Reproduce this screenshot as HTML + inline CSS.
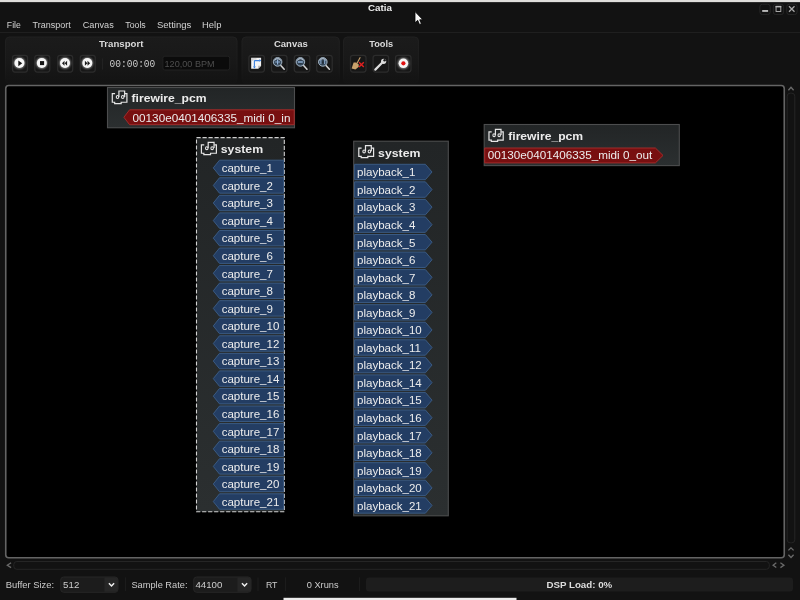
<!DOCTYPE html><html><head><meta charset="utf-8"><style>html,body{margin:0;padding:0;background:#121212;overflow:hidden}svg{display:block;will-change:transform}</style></head><body><svg width="800" height="600" viewBox="0 0 800 600"><rect x="0" y="0" width="800" height="600" fill="#121212"/>
<rect x="0" y="0" width="800" height="2.2" fill="#dfdedb"/>
<rect x="0" y="2.2" width="800" height="0.8" fill="#2a2a2a"/>
<rect x="759.9" y="4.25" width="10.3" height="10.3" rx="2.5" fill="none" stroke="#262626" stroke-width="1"/>
<rect x="773.3" y="4.25" width="10.3" height="10.3" rx="2.5" fill="none" stroke="#262626" stroke-width="1"/>
<rect x="786.75" y="4.25" width="10.3" height="10.3" rx="2.5" fill="none" stroke="#262626" stroke-width="1"/>
<rect x="762.2" y="10" width="5.9" height="1.9" fill="#b8b8b8"/>
<rect x="776.05" y="6.4" width="4.75" height="5.05" fill="none" stroke="#b8b8b8" stroke-width="0.9"/>
<rect x="775.6" y="5.9" width="5.65" height="1.5" fill="#b8b8b8"/>
<path d="M789 6.3 L794.5 11.7 M794.5 6.3 L789 11.7" stroke="#a8a8a8" stroke-width="1.3"/>
<rect x="0" y="32" width="800" height="1" fill="#1f1f1f"/>
<rect x="5.5" y="37" width="231.5" height="46.5" rx="4" fill="url(#grpg)" stroke="url(#grps)" stroke-width="1"/>
<rect x="242.0" y="37" width="97.30000000000001" height="46.5" rx="4" fill="url(#grpg)" stroke="url(#grps)" stroke-width="1"/>
<rect x="343.5" y="37" width="75" height="46.5" rx="4" fill="url(#grpg)" stroke="url(#grps)" stroke-width="1"/>
<rect x="12.5" y="55.3" width="15" height="16.7" rx="2.5" fill="#171717" stroke="#2c2c2c" stroke-width="1.25"/>
<rect x="34.8" y="55.3" width="15" height="16.7" rx="2.5" fill="#171717" stroke="#2c2c2c" stroke-width="1.25"/>
<rect x="57.7" y="55.3" width="15" height="16.7" rx="2.5" fill="#171717" stroke="#2c2c2c" stroke-width="1.25"/>
<rect x="80.25" y="55.3" width="15" height="16.7" rx="2.5" fill="#171717" stroke="#2c2c2c" stroke-width="1.25"/>
<rect x="248.9" y="55.3" width="15.5" height="16.7" rx="2.5" fill="#171717" stroke="#2c2c2c" stroke-width="1.25"/>
<rect x="271.5" y="55.3" width="15.5" height="16.7" rx="2.5" fill="#171717" stroke="#2c2c2c" stroke-width="1.25"/>
<rect x="294.3" y="55.3" width="15.5" height="16.7" rx="2.5" fill="#171717" stroke="#2c2c2c" stroke-width="1.25"/>
<rect x="316.7" y="55.3" width="15.5" height="16.7" rx="2.5" fill="#171717" stroke="#2c2c2c" stroke-width="1.25"/>
<rect x="350.5" y="55.3" width="15.5" height="16.7" rx="2.5" fill="#171717" stroke="#2c2c2c" stroke-width="1.25"/>
<rect x="373.1" y="55.3" width="15.5" height="16.7" rx="2.5" fill="#171717" stroke="#2c2c2c" stroke-width="1.25"/>
<rect x="395.5" y="55.3" width="15.5" height="16.7" rx="2.5" fill="#171717" stroke="#2c2c2c" stroke-width="1.25"/>
<rect x="102" y="58.5" width="1" height="11.2" fill="#222"/>
<defs><filter id="glow" x="-50%" y="-50%" width="200%" height="200%"><feGaussianBlur stdDeviation="0.9"/></filter><linearGradient id="grpg" x1="0" y1="0" x2="0" y2="1"><stop offset="0" stop-color="#1b1b1b"/><stop offset="0.55" stop-color="#181818"/><stop offset="1" stop-color="#131313"/></linearGradient><linearGradient id="grps" x1="0" y1="0" x2="0" y2="1"><stop offset="0" stop-color="#202020"/><stop offset="0.6" stop-color="#1c1c1c"/><stop offset="1" stop-color="#131313"/></linearGradient><radialGradient id="lens" cx="0.5" cy="0.55" r="0.55"><stop offset="0" stop-color="#1f2a35"/><stop offset="0.7" stop-color="#3e5266"/><stop offset="1" stop-color="#7d93a8"/></radialGradient><linearGradient id="boxg" x1="0" y1="0" x2="0" y2="1"><stop offset="0" stop-color="#222526"/><stop offset="1" stop-color="#2b2f30"/></linearGradient></defs>
<circle cx="19.45" cy="63" r="5.5" fill="#ffffff" opacity="0.6" filter="url(#glow)"/>
<circle cx="19.45" cy="63" r="5.0" fill="#f6f6f6"/>
<circle cx="41.8" cy="63" r="5.5" fill="#ffffff" opacity="0.6" filter="url(#glow)"/>
<circle cx="41.8" cy="63" r="5.0" fill="#f6f6f6"/>
<circle cx="65.0" cy="63" r="5.5" fill="#ffffff" opacity="0.6" filter="url(#glow)"/>
<circle cx="65.0" cy="63" r="5.0" fill="#f6f6f6"/>
<circle cx="87.3" cy="63" r="5.5" fill="#ffffff" opacity="0.6" filter="url(#glow)"/>
<circle cx="87.3" cy="63" r="5.0" fill="#f6f6f6"/>
<path d="M18.3 60.4 L22.2 63.3 L18.3 66.2 Z" fill="#151515"/>
<rect x="40" y="61.1" width="4.1" height="4" fill="#151515"/>
<path d="M62 63.2 L64.5 60.7 L64.5 65.7 Z M64.7 63.2 L67.1 60.7 L67.1 65.7 Z" fill="#1a1a1a"/>
<path d="M84.9 60.7 L87.4 63.2 L84.9 65.7 Z M87.5 60.7 L90.1 63.2 L87.5 65.7 Z" fill="#1a1a1a"/>
<rect x="162.9" y="56.2" width="66.8" height="13.8" rx="2" fill="#0b0b0b" stroke="#222222" stroke-width="1"/>
<path d="M251.2 57.8 H261.1 V65.8 L258.1 68.8 H251.2 Z" fill="#f4f4f4"/>
<path d="M258.1 68.8 V65.8 H261.1 Z" fill="#b8b8b8"/>
<path d="M252 58.9 H256.5 M252 60.1 H253.4" stroke="#a0a0a0" stroke-width="0.6"/>
<path d="M254.4 60.6 H259.8 M254.4 60.6 V66.8" stroke="#3a7fdc" stroke-width="1.1" fill="none"/>
<path d="M259.5 59.1 L261.2 60.6 L259.5 62.1 Z M252.9 66.5 L254.4 68.4 L255.9 66.5 Z" fill="#3a7fdc"/>
<path d="M280.8 65.4 L284.20000000000005 69.2" stroke="#d4d4d4" stroke-width="1.5" stroke-linecap="round"/>
<circle cx="277.6" cy="61.9" r="4.3" fill="url(#lens)" stroke="#9fb0c0" stroke-width="1.0"/>
<path d="M274.6 60.6 A3.3 3.3 0 0 1 280.6 60.6" fill="none" stroke="#e4eaf0" stroke-width="0.9" opacity="0.8"/>
<path d="M303.59999999999997 65.4 L307.0 69.2" stroke="#d4d4d4" stroke-width="1.5" stroke-linecap="round"/>
<circle cx="300.4" cy="61.9" r="4.3" fill="url(#lens)" stroke="#9fb0c0" stroke-width="1.0"/>
<path d="M297.4 60.6 A3.3 3.3 0 0 1 303.4 60.6" fill="none" stroke="#e4eaf0" stroke-width="0.9" opacity="0.8"/>
<path d="M326.0 65.4 L329.40000000000003 69.2" stroke="#d4d4d4" stroke-width="1.5" stroke-linecap="round"/>
<circle cx="322.8" cy="61.9" r="4.3" fill="url(#lens)" stroke="#9fb0c0" stroke-width="1.0"/>
<path d="M319.8 60.6 A3.3 3.3 0 0 1 325.8 60.6" fill="none" stroke="#e4eaf0" stroke-width="0.9" opacity="0.8"/>
<path d="M275.2 62 H280 M277.6 59.6 V64.4" stroke="#8fb0d6" stroke-width="1.2"/>
<path d="M298 62 H302.8" stroke="#8fb0d6" stroke-width="1.5"/>
<path d="M320.9 59.9 V64 M324.7 59.9 V64" stroke="#8fb0d6" stroke-width="1.0"/>
<path d="M357 63.2 L360.3 57.3" stroke="#c9a26c" stroke-width="1.1"/>
<path d="M351.6 68.6 L353.6 62.6 L356 62.4 L358.6 64.2 L358.8 66.8 L355.4 69.4 Z" fill="#c9a26c"/>
<path d="M359 62.2 L363.8 67 M363.8 62.2 L359 67" stroke="#e02020" stroke-width="1.4"/>
<path d="M375.3 69.6 L382.6 62.3" stroke="#dcdcdc" stroke-width="2.2" stroke-linecap="round"/>
<circle cx="383.6" cy="61.3" r="2.6" fill="#dcdcdc"/><circle cx="384.6" cy="60.3" r="1.2" fill="#1a1a1a"/>
<circle cx="403.4" cy="63.3" r="5.6" fill="#ffffff" opacity="0.5" filter="url(#glow)"/>
<circle cx="403.4" cy="63.3" r="4.8" fill="#f4f4f4"/><circle cx="403.4" cy="63.3" r="2.1" fill="#e01010"/>
<rect x="5.75" y="85.5" width="778.5" height="472.3" rx="3" fill="#000" stroke="#646464" stroke-width="1.6"/>
<path d="M788.4 90.3 L791.0 87.3 L793.6 90.3" fill="none" stroke="#6a6a6a" stroke-width="1.3"/>
<rect x="787.2" y="93.2" width="7.6" height="449.6" rx="3" fill="none" stroke="#252525" stroke-width="1"/>
<path d="M788.4 550.4 L791.0 547.8 L793.6 550.4" fill="none" stroke="#6a6a6a" stroke-width="1.3"/>
<path d="M788.4 554.7 L791.0 557.5 L793.6 554.7" fill="none" stroke="#6a6a6a" stroke-width="1.3"/>
<path d="M11.1 562.8 L7.3 565.2 L11.1 567.6" fill="none" stroke="#6a6a6a" stroke-width="1.3"/>
<rect x="13.8" y="561.5" width="755.5" height="7.8" rx="3" fill="none" stroke="#252525" stroke-width="1"/>
<path d="M776.3 562.8 L773.1 565.2 L776.3 567.6" fill="none" stroke="#6a6a6a" stroke-width="1.3"/>
<path d="M780.4 562.8 L783.9 565.2 L780.4 567.6" fill="none" stroke="#6a6a6a" stroke-width="1.3"/>
<rect x="60.7" y="577" width="57.3" height="15.3" rx="3" fill="#1c1c1c" stroke="#262626" stroke-width="1"/>
<path d="M104.5 577.5 H115.0 Q118.0 577.5 118.0 580.5 V588.8 Q118.0 591.8 115.0 591.8 H104.5 Z" fill="#262626"/>
<path d="M108.9 583.2 L111.5 585.9 L114.1 583.2" fill="none" stroke="#f0f0f0" stroke-width="1.5"/>
<rect x="125" y="577.3" width="1" height="13.7" fill="#1c1c1c"/>
<rect x="193.7" y="577" width="57.400000000000006" height="15.3" rx="3" fill="#1c1c1c" stroke="#262626" stroke-width="1"/>
<path d="M237.5 577.5 H248.1 Q251.1 577.5 251.1 580.5 V588.8 Q251.1 591.8 248.1 591.8 H237.5 Z" fill="#262626"/>
<path d="M241.95000000000002 583.2 L244.55 585.9 L247.15 583.2" fill="none" stroke="#f0f0f0" stroke-width="1.5"/>
<rect x="257.5" y="577.3" width="1" height="13.7" fill="#1c1c1c"/>
<rect x="285" y="577.3" width="1" height="13.7" fill="#1c1c1c"/>
<rect x="359" y="577.3" width="1" height="13.7" fill="#1c1c1c"/>
<rect x="366" y="577.5" width="427" height="14.1" rx="3" fill="#1d1d1d"/>
<rect x="283.5" y="597.8" width="233" height="2.2" fill="#ececec"/>
<rect x="107.5" y="87.5" width="187.0" height="40.25" fill="url(#boxg)" stroke="#4c4d4e" stroke-width="1.1"/>
<path d="M115.06 93.62 H112.29 V102.23 H114.66 V103.58 H121.18 V102.23 H126.91 V93.62 H124.93" fill="none" stroke="#e6e6e6" stroke-width="1.2"/>
<path d="M118.91 96.94 V91.02 H124.64 V96.94" fill="none" stroke="#e6e6e6" stroke-width="1.2"/>
<ellipse cx="117.53" cy="97.04" rx="1.2343749999999998" ry="1.5057692307692307" fill="none" stroke="#e6e6e6" stroke-width="1.1"/>
<ellipse cx="122.76" cy="97.04" rx="1.2343749999999998" ry="1.5057692307692307" fill="none" stroke="#e6e6e6" stroke-width="1.1"/>
<path d="M123.9 117.25 L129.6 109.8 H294.2 V124.7 H129.6 Z" fill="#780f10" stroke="#a02c2a" stroke-width="1"/>
<rect x="196.5" y="137.6" width="87.80000000000001" height="374.20000000000005" fill="url(#boxg)"/>
<rect x="196.5" y="137.6" width="87.80000000000001" height="374.20000000000005" fill="none" stroke="#d0d0d0" stroke-width="1.1" stroke-dasharray="4.2 1.8"/>
<path d="M204.24 144.85 H201.41 V153.27 H203.84 V154.59 H210.52 V153.27 H216.39 V144.85 H214.37" fill="none" stroke="#e6e6e6" stroke-width="1.2"/>
<path d="M208.19 148.1 V142.31 H214.06 V148.1" fill="none" stroke="#e6e6e6" stroke-width="1.2"/>
<ellipse cx="206.77" cy="148.2" rx="1.2656249999999991" ry="1.472307692307691" fill="none" stroke="#e6e6e6" stroke-width="1.1"/>
<ellipse cx="212.14" cy="148.2" rx="1.2656249999999991" ry="1.472307692307691" fill="none" stroke="#e6e6e6" stroke-width="1.1"/>
<path d="M213.3 167.89999999999998 L219.5 160.2 H283.6 V175.6 H219.5 Z" fill="#233d63" stroke="#3a5a82" stroke-width="1"/>
<path d="M213.3 185.45999999999998 L219.5 177.76 H283.6 V193.16 H219.5 Z" fill="#233d63" stroke="#3a5a82" stroke-width="1"/>
<path d="M213.3 203.01999999999998 L219.5 195.32 H283.6 V210.72 H219.5 Z" fill="#233d63" stroke="#3a5a82" stroke-width="1"/>
<path d="M213.3 220.57999999999998 L219.5 212.88 H283.6 V228.28 H219.5 Z" fill="#233d63" stroke="#3a5a82" stroke-width="1"/>
<path d="M213.3 238.14 L219.5 230.44 H283.6 V245.84 H219.5 Z" fill="#233d63" stroke="#3a5a82" stroke-width="1"/>
<path d="M213.3 255.7 L219.5 248.0 H283.6 V263.4 H219.5 Z" fill="#233d63" stroke="#3a5a82" stroke-width="1"/>
<path d="M213.3 273.25999999999993 L219.5 265.55999999999995 H283.6 V280.9599999999999 H219.5 Z" fill="#233d63" stroke="#3a5a82" stroke-width="1"/>
<path d="M213.3 290.82 L219.5 283.12 H283.6 V298.52 H219.5 Z" fill="#233d63" stroke="#3a5a82" stroke-width="1"/>
<path d="M213.3 308.37999999999994 L219.5 300.67999999999995 H283.6 V316.0799999999999 H219.5 Z" fill="#233d63" stroke="#3a5a82" stroke-width="1"/>
<path d="M213.3 325.94 L219.5 318.24 H283.6 V333.64 H219.5 Z" fill="#233d63" stroke="#3a5a82" stroke-width="1"/>
<path d="M213.3 343.49999999999994 L219.5 335.79999999999995 H283.6 V351.19999999999993 H219.5 Z" fill="#233d63" stroke="#3a5a82" stroke-width="1"/>
<path d="M213.3 361.06 L219.5 353.36 H283.6 V368.76 H219.5 Z" fill="#233d63" stroke="#3a5a82" stroke-width="1"/>
<path d="M213.3 378.61999999999995 L219.5 370.91999999999996 H283.6 V386.31999999999994 H219.5 Z" fill="#233d63" stroke="#3a5a82" stroke-width="1"/>
<path d="M213.3 396.17999999999995 L219.5 388.47999999999996 H283.6 V403.87999999999994 H219.5 Z" fill="#233d63" stroke="#3a5a82" stroke-width="1"/>
<path d="M213.3 413.73999999999995 L219.5 406.03999999999996 H283.6 V421.43999999999994 H219.5 Z" fill="#233d63" stroke="#3a5a82" stroke-width="1"/>
<path d="M213.3 431.29999999999995 L219.5 423.59999999999997 H283.6 V438.99999999999994 H219.5 Z" fill="#233d63" stroke="#3a5a82" stroke-width="1"/>
<path d="M213.3 448.85999999999996 L219.5 441.15999999999997 H283.6 V456.55999999999995 H219.5 Z" fill="#233d63" stroke="#3a5a82" stroke-width="1"/>
<path d="M213.3 466.41999999999996 L219.5 458.71999999999997 H283.6 V474.11999999999995 H219.5 Z" fill="#233d63" stroke="#3a5a82" stroke-width="1"/>
<path d="M213.3 483.97999999999996 L219.5 476.28 H283.6 V491.67999999999995 H219.5 Z" fill="#233d63" stroke="#3a5a82" stroke-width="1"/>
<path d="M213.3 501.53999999999996 L219.5 493.84 H283.6 V509.23999999999995 H219.5 Z" fill="#233d63" stroke="#3a5a82" stroke-width="1"/>
<rect x="353.7" y="141.2" width="94.60000000000002" height="374.59999999999997" fill="url(#boxg)" stroke="#4c4d4e" stroke-width="1.1"/>
<path d="M361.6 148.15 H358.8 V156.33 H361.2 V157.61 H367.8 V156.33 H373.6 V148.15 H371.6" fill="none" stroke="#e6e6e6" stroke-width="1.2"/>
<path d="M365.5 151.3 V145.69 H371.3 V151.3" fill="none" stroke="#e6e6e6" stroke-width="1.2"/>
<ellipse cx="364.1" cy="151.4" rx="1.25" ry="1.427692307692309" fill="none" stroke="#e6e6e6" stroke-width="1.1"/>
<ellipse cx="369.4" cy="151.4" rx="1.25" ry="1.427692307692309" fill="none" stroke="#e6e6e6" stroke-width="1.1"/>
<path d="M354.6 164.3 H425.4 L432 172.0 L425.4 179.70000000000002 H354.6 Z" fill="#233d63" stroke="#3a5a82" stroke-width="1"/>
<path d="M354.6 181.85000000000002 H425.4 L432 189.55 L425.4 197.25000000000003 H354.6 Z" fill="#233d63" stroke="#3a5a82" stroke-width="1"/>
<path d="M354.6 199.4 H425.4 L432 207.10000000000002 L425.4 214.8 H354.6 Z" fill="#233d63" stroke="#3a5a82" stroke-width="1"/>
<path d="M354.6 216.95000000000002 H425.4 L432 224.65000000000003 L425.4 232.35000000000002 H354.6 Z" fill="#233d63" stroke="#3a5a82" stroke-width="1"/>
<path d="M354.6 234.5 H425.4 L432 242.2 L425.4 249.9 H354.6 Z" fill="#233d63" stroke="#3a5a82" stroke-width="1"/>
<path d="M354.6 252.05 H425.4 L432 259.75 L425.4 267.45 H354.6 Z" fill="#233d63" stroke="#3a5a82" stroke-width="1"/>
<path d="M354.6 269.6 H425.4 L432 277.3 L425.4 285.0 H354.6 Z" fill="#233d63" stroke="#3a5a82" stroke-width="1"/>
<path d="M354.6 287.15000000000003 H425.4 L432 294.85 L425.4 302.55 H354.6 Z" fill="#233d63" stroke="#3a5a82" stroke-width="1"/>
<path d="M354.6 304.70000000000005 H425.4 L432 312.40000000000003 L425.4 320.1 H354.6 Z" fill="#233d63" stroke="#3a5a82" stroke-width="1"/>
<path d="M354.6 322.25 H425.4 L432 329.95 L425.4 337.65 H354.6 Z" fill="#233d63" stroke="#3a5a82" stroke-width="1"/>
<path d="M354.6 339.8 H425.4 L432 347.5 L425.4 355.2 H354.6 Z" fill="#233d63" stroke="#3a5a82" stroke-width="1"/>
<path d="M354.6 357.35 H425.4 L432 365.05 L425.4 372.75 H354.6 Z" fill="#233d63" stroke="#3a5a82" stroke-width="1"/>
<path d="M354.6 374.90000000000003 H425.4 L432 382.6 L425.4 390.3 H354.6 Z" fill="#233d63" stroke="#3a5a82" stroke-width="1"/>
<path d="M354.6 392.45000000000005 H425.4 L432 400.15000000000003 L425.4 407.85 H354.6 Z" fill="#233d63" stroke="#3a5a82" stroke-width="1"/>
<path d="M354.6 410.0 H425.4 L432 417.7 L425.4 425.4 H354.6 Z" fill="#233d63" stroke="#3a5a82" stroke-width="1"/>
<path d="M354.6 427.55 H425.4 L432 435.25 L425.4 442.95 H354.6 Z" fill="#233d63" stroke="#3a5a82" stroke-width="1"/>
<path d="M354.6 445.1 H425.4 L432 452.8 L425.4 460.5 H354.6 Z" fill="#233d63" stroke="#3a5a82" stroke-width="1"/>
<path d="M354.6 462.65000000000003 H425.4 L432 470.35 L425.4 478.05 H354.6 Z" fill="#233d63" stroke="#3a5a82" stroke-width="1"/>
<path d="M354.6 480.20000000000005 H425.4 L432 487.90000000000003 L425.4 495.6 H354.6 Z" fill="#233d63" stroke="#3a5a82" stroke-width="1"/>
<path d="M354.6 497.75 H425.4 L432 505.45 L425.4 513.15 H354.6 Z" fill="#233d63" stroke="#3a5a82" stroke-width="1"/>
<rect x="484.2" y="124.5" width="195.09999999999997" height="41.099999999999994" fill="url(#boxg)" stroke="#4c4d4e" stroke-width="1.1"/>
<path d="M491.67 131.88 H488.98 V140.11 H491.29 V141.4 H497.64 V140.11 H503.22 V131.88 H501.3" fill="none" stroke="#e6e6e6" stroke-width="1.2"/>
<path d="M495.43 135.05 V129.4 H501.01 V135.05" fill="none" stroke="#e6e6e6" stroke-width="1.2"/>
<ellipse cx="494.08" cy="135.15" rx="1.2031250000000027" ry="1.4388461538461546" fill="none" stroke="#e6e6e6" stroke-width="1.1"/>
<ellipse cx="499.18" cy="135.15" rx="1.2031250000000027" ry="1.4388461538461546" fill="none" stroke="#e6e6e6" stroke-width="1.1"/>
<path d="M484.7 148 H655.4 L663 155.45 L655.4 162.9 H484.7 Z" fill="#780f10" stroke="#a02c2a" stroke-width="1"/>
<text transform="translate(368.25 10.75) scale(1.1150 1)" x="-0.28" y="0" font-size="8.8" fill="#ececec" font-weight="bold" style="font-family:&quot;Liberation Sans&quot;,sans-serif;white-space:pre">Catia</text>
<text transform="translate(7.50 27.5) scale(0.9168 1)" x="-0.74" y="0" font-size="9.5" fill="#d2d2d2" style="font-family:&quot;Liberation Sans&quot;,sans-serif;white-space:pre">File</text>
<text transform="translate(32.70 27.5) scale(0.9481 1)" x="-0.15" y="0" font-size="9.5" fill="#d2d2d2" style="font-family:&quot;Liberation Sans&quot;,sans-serif;white-space:pre">Transport</text>
<text transform="translate(83.20 27.5) scale(0.9629 1)" x="-0.45" y="0" font-size="9.5" fill="#d2d2d2" style="font-family:&quot;Liberation Sans&quot;,sans-serif;white-space:pre">Canvas</text>
<text transform="translate(125.40 27.5) scale(0.9249 1)" x="-0.15" y="0" font-size="9.5" fill="#d2d2d2" style="font-family:&quot;Liberation Sans&quot;,sans-serif;white-space:pre">Tools</text>
<text transform="translate(157.20 27.5) scale(1.0020 1)" x="-0.30" y="0" font-size="9.5" fill="#d2d2d2" style="font-family:&quot;Liberation Sans&quot;,sans-serif;white-space:pre">Settings</text>
<text transform="translate(202.70 27.5) scale(0.9940 1)" x="-0.74" y="0" font-size="9.5" fill="#d2d2d2" style="font-family:&quot;Liberation Sans&quot;,sans-serif;white-space:pre">Help</text>
<text transform="translate(99.00 47.3) scale(1.0253 1)" x="0.00" y="0" font-size="9.4" fill="#dadada" font-weight="bold" style="font-family:&quot;Liberation Sans&quot;,sans-serif;white-space:pre">Transport</text>
<text transform="translate(274.20 47.2) scale(1.0163 1)" x="-0.29" y="0" font-size="9.4" fill="#dadada" font-weight="bold" style="font-family:&quot;Liberation Sans&quot;,sans-serif;white-space:pre">Canvas</text>
<text transform="translate(369.20 47.2) scale(0.9839 1)" x="0.00" y="0" font-size="9.4" fill="#dadada" font-weight="bold" style="font-family:&quot;Liberation Sans&quot;,sans-serif;white-space:pre">Tools</text>
<text transform="translate(109.90 67.4) scale(0.9385 1)" x="-0.48" y="0" font-size="10.2" fill="#c9c9c9" style="font-family:&quot;Liberation Mono&quot;,sans-serif;white-space:pre">00:00:00</text>
<text transform="translate(165.10 66.5) scale(1.0111 1)" x="-0.56" y="0" font-size="9.0" fill="#4e4e4e" style="font-family:&quot;Liberation Sans&quot;,sans-serif;white-space:pre">120,00 BPM</text>
<text transform="translate(6.50 587.9) scale(0.9784 1)" x="-0.75" y="0" font-size="9.6" fill="#cdcdcd" style="font-family:&quot;Liberation Sans&quot;,sans-serif;white-space:pre">Buffer Size:</text>
<text transform="translate(63.40 587.9) scale(1.0112 1)" x="-0.30" y="0" font-size="9.6" fill="#cdcdcd" style="font-family:&quot;Liberation Sans&quot;,sans-serif;white-space:pre">512</text>
<text transform="translate(131.70 587.9) scale(0.9650 1)" x="-0.30" y="0" font-size="9.6" fill="#cdcdcd" style="font-family:&quot;Liberation Sans&quot;,sans-serif;white-space:pre">Sample Rate:</text>
<text transform="translate(195.60 587.9) scale(1.0074 1)" x="-0.15" y="0" font-size="9.6" fill="#cdcdcd" style="font-family:&quot;Liberation Sans&quot;,sans-serif;white-space:pre">44100</text>
<text transform="translate(266.60 587.9) scale(0.9138 1)" x="-0.75" y="0" font-size="9.6" fill="#cdcdcd" style="font-family:&quot;Liberation Sans&quot;,sans-serif;white-space:pre">RT</text>
<text transform="translate(307.00 587.9) scale(0.9666 1)" x="-0.30" y="0" font-size="9.6" fill="#cdcdcd" style="font-family:&quot;Liberation Sans&quot;,sans-serif;white-space:pre">0 Xruns</text>
<text transform="translate(547.00 588) scale(1.0060 1)" x="-0.61" y="0" font-size="9.7" fill="#dedede" font-weight="bold" style="font-family:&quot;Liberation Sans&quot;,sans-serif;white-space:pre">DSP Load: 0%</text>
<text transform="translate(131.75 102) scale(1.1150 1)" x="-0.17" y="0" font-size="10.9" fill="#ececec" font-weight="bold" style="font-family:&quot;Liberation Sans&quot;,sans-serif;white-space:pre">firewire_pcm</text>
<text transform="translate(132.90 121.6) scale(1.1191 1)" x="-0.33" y="0" font-size="10.5" fill="#ededed" style="font-family:&quot;Liberation Sans&quot;,sans-serif;white-space:pre">00130e0401406335_midi 0_in</text>
<text transform="translate(221.10 153) scale(1.1268 1)" x="-0.34" y="0" font-size="10.9" fill="#ececec" font-weight="bold" style="font-family:&quot;Liberation Sans&quot;,sans-serif;white-space:pre">system</text>
<text transform="translate(222.00 172.2) scale(1.1000 1)" x="-0.33" y="0" font-size="10.5" fill="#ededed" style="font-family:&quot;Liberation Sans&quot;,sans-serif;white-space:pre">capture_1</text>
<text transform="translate(222.00 189.76) scale(1.1000 1)" x="-0.33" y="0" font-size="10.5" fill="#ededed" style="font-family:&quot;Liberation Sans&quot;,sans-serif;white-space:pre">capture_2</text>
<text transform="translate(222.00 207.32) scale(1.1000 1)" x="-0.33" y="0" font-size="10.5" fill="#ededed" style="font-family:&quot;Liberation Sans&quot;,sans-serif;white-space:pre">capture_3</text>
<text transform="translate(222.00 224.88) scale(1.1000 1)" x="-0.33" y="0" font-size="10.5" fill="#ededed" style="font-family:&quot;Liberation Sans&quot;,sans-serif;white-space:pre">capture_4</text>
<text transform="translate(222.00 242.44) scale(1.1000 1)" x="-0.33" y="0" font-size="10.5" fill="#ededed" style="font-family:&quot;Liberation Sans&quot;,sans-serif;white-space:pre">capture_5</text>
<text transform="translate(222.00 260.0) scale(1.1000 1)" x="-0.33" y="0" font-size="10.5" fill="#ededed" style="font-family:&quot;Liberation Sans&quot;,sans-serif;white-space:pre">capture_6</text>
<text transform="translate(222.00 277.55999999999995) scale(1.1000 1)" x="-0.33" y="0" font-size="10.5" fill="#ededed" style="font-family:&quot;Liberation Sans&quot;,sans-serif;white-space:pre">capture_7</text>
<text transform="translate(222.00 295.12) scale(1.1000 1)" x="-0.33" y="0" font-size="10.5" fill="#ededed" style="font-family:&quot;Liberation Sans&quot;,sans-serif;white-space:pre">capture_8</text>
<text transform="translate(222.00 312.67999999999995) scale(1.1000 1)" x="-0.33" y="0" font-size="10.5" fill="#ededed" style="font-family:&quot;Liberation Sans&quot;,sans-serif;white-space:pre">capture_9</text>
<text transform="translate(222.00 330.24) scale(1.1000 1)" x="-0.33" y="0" font-size="10.5" fill="#ededed" style="font-family:&quot;Liberation Sans&quot;,sans-serif;white-space:pre">capture_10</text>
<text transform="translate(222.00 347.79999999999995) scale(1.1000 1)" x="-0.33" y="0" font-size="10.5" fill="#ededed" style="font-family:&quot;Liberation Sans&quot;,sans-serif;white-space:pre">capture_12</text>
<text transform="translate(222.00 365.36) scale(1.1000 1)" x="-0.33" y="0" font-size="10.5" fill="#ededed" style="font-family:&quot;Liberation Sans&quot;,sans-serif;white-space:pre">capture_13</text>
<text transform="translate(222.00 382.91999999999996) scale(1.1000 1)" x="-0.33" y="0" font-size="10.5" fill="#ededed" style="font-family:&quot;Liberation Sans&quot;,sans-serif;white-space:pre">capture_14</text>
<text transform="translate(222.00 400.47999999999996) scale(1.1000 1)" x="-0.33" y="0" font-size="10.5" fill="#ededed" style="font-family:&quot;Liberation Sans&quot;,sans-serif;white-space:pre">capture_15</text>
<text transform="translate(222.00 418.03999999999996) scale(1.1000 1)" x="-0.33" y="0" font-size="10.5" fill="#ededed" style="font-family:&quot;Liberation Sans&quot;,sans-serif;white-space:pre">capture_16</text>
<text transform="translate(222.00 435.59999999999997) scale(1.1000 1)" x="-0.33" y="0" font-size="10.5" fill="#ededed" style="font-family:&quot;Liberation Sans&quot;,sans-serif;white-space:pre">capture_17</text>
<text transform="translate(222.00 453.15999999999997) scale(1.1000 1)" x="-0.33" y="0" font-size="10.5" fill="#ededed" style="font-family:&quot;Liberation Sans&quot;,sans-serif;white-space:pre">capture_18</text>
<text transform="translate(222.00 470.71999999999997) scale(1.1000 1)" x="-0.33" y="0" font-size="10.5" fill="#ededed" style="font-family:&quot;Liberation Sans&quot;,sans-serif;white-space:pre">capture_19</text>
<text transform="translate(222.00 488.28) scale(1.1000 1)" x="-0.33" y="0" font-size="10.5" fill="#ededed" style="font-family:&quot;Liberation Sans&quot;,sans-serif;white-space:pre">capture_20</text>
<text transform="translate(222.00 505.84) scale(1.1000 1)" x="-0.33" y="0" font-size="10.5" fill="#ededed" style="font-family:&quot;Liberation Sans&quot;,sans-serif;white-space:pre">capture_21</text>
<text transform="translate(378.50 156.8) scale(1.1268 1)" x="-0.34" y="0" font-size="10.9" fill="#ececec" font-weight="bold" style="font-family:&quot;Liberation Sans&quot;,sans-serif;white-space:pre">system</text>
<text transform="translate(357.75 176.3) scale(1.1000 1)" x="-0.66" y="0" font-size="10.5" fill="#ededed" style="font-family:&quot;Liberation Sans&quot;,sans-serif;white-space:pre">playback_1</text>
<text transform="translate(357.75 193.85000000000002) scale(1.1000 1)" x="-0.66" y="0" font-size="10.5" fill="#ededed" style="font-family:&quot;Liberation Sans&quot;,sans-serif;white-space:pre">playback_2</text>
<text transform="translate(357.75 211.4) scale(1.1000 1)" x="-0.66" y="0" font-size="10.5" fill="#ededed" style="font-family:&quot;Liberation Sans&quot;,sans-serif;white-space:pre">playback_3</text>
<text transform="translate(357.75 228.95000000000002) scale(1.1000 1)" x="-0.66" y="0" font-size="10.5" fill="#ededed" style="font-family:&quot;Liberation Sans&quot;,sans-serif;white-space:pre">playback_4</text>
<text transform="translate(357.75 246.5) scale(1.1000 1)" x="-0.66" y="0" font-size="10.5" fill="#ededed" style="font-family:&quot;Liberation Sans&quot;,sans-serif;white-space:pre">playback_5</text>
<text transform="translate(357.75 264.05) scale(1.1000 1)" x="-0.66" y="0" font-size="10.5" fill="#ededed" style="font-family:&quot;Liberation Sans&quot;,sans-serif;white-space:pre">playback_6</text>
<text transform="translate(357.75 281.6) scale(1.1000 1)" x="-0.66" y="0" font-size="10.5" fill="#ededed" style="font-family:&quot;Liberation Sans&quot;,sans-serif;white-space:pre">playback_7</text>
<text transform="translate(357.75 299.15000000000003) scale(1.1000 1)" x="-0.66" y="0" font-size="10.5" fill="#ededed" style="font-family:&quot;Liberation Sans&quot;,sans-serif;white-space:pre">playback_8</text>
<text transform="translate(357.75 316.70000000000005) scale(1.1000 1)" x="-0.66" y="0" font-size="10.5" fill="#ededed" style="font-family:&quot;Liberation Sans&quot;,sans-serif;white-space:pre">playback_9</text>
<text transform="translate(357.75 334.25) scale(1.1000 1)" x="-0.66" y="0" font-size="10.5" fill="#ededed" style="font-family:&quot;Liberation Sans&quot;,sans-serif;white-space:pre">playback_10</text>
<text transform="translate(357.75 351.8) scale(1.1000 1)" x="-0.66" y="0" font-size="10.5" fill="#ededed" style="font-family:&quot;Liberation Sans&quot;,sans-serif;white-space:pre">playback_11</text>
<text transform="translate(357.75 369.35) scale(1.1000 1)" x="-0.66" y="0" font-size="10.5" fill="#ededed" style="font-family:&quot;Liberation Sans&quot;,sans-serif;white-space:pre">playback_12</text>
<text transform="translate(357.75 386.90000000000003) scale(1.1000 1)" x="-0.66" y="0" font-size="10.5" fill="#ededed" style="font-family:&quot;Liberation Sans&quot;,sans-serif;white-space:pre">playback_14</text>
<text transform="translate(357.75 404.45000000000005) scale(1.1000 1)" x="-0.66" y="0" font-size="10.5" fill="#ededed" style="font-family:&quot;Liberation Sans&quot;,sans-serif;white-space:pre">playback_15</text>
<text transform="translate(357.75 422.0) scale(1.1000 1)" x="-0.66" y="0" font-size="10.5" fill="#ededed" style="font-family:&quot;Liberation Sans&quot;,sans-serif;white-space:pre">playback_16</text>
<text transform="translate(357.75 439.55) scale(1.1000 1)" x="-0.66" y="0" font-size="10.5" fill="#ededed" style="font-family:&quot;Liberation Sans&quot;,sans-serif;white-space:pre">playback_17</text>
<text transform="translate(357.75 457.1) scale(1.1000 1)" x="-0.66" y="0" font-size="10.5" fill="#ededed" style="font-family:&quot;Liberation Sans&quot;,sans-serif;white-space:pre">playback_18</text>
<text transform="translate(357.75 474.65000000000003) scale(1.1000 1)" x="-0.66" y="0" font-size="10.5" fill="#ededed" style="font-family:&quot;Liberation Sans&quot;,sans-serif;white-space:pre">playback_19</text>
<text transform="translate(357.75 492.20000000000005) scale(1.1000 1)" x="-0.66" y="0" font-size="10.5" fill="#ededed" style="font-family:&quot;Liberation Sans&quot;,sans-serif;white-space:pre">playback_20</text>
<text transform="translate(357.75 509.75) scale(1.1000 1)" x="-0.66" y="0" font-size="10.5" fill="#ededed" style="font-family:&quot;Liberation Sans&quot;,sans-serif;white-space:pre">playback_21</text>
<text transform="translate(508.40 140) scale(1.1150 1)" x="-0.17" y="0" font-size="10.9" fill="#ececec" font-weight="bold" style="font-family:&quot;Liberation Sans&quot;,sans-serif;white-space:pre">firewire_pcm</text>
<text transform="translate(488.00 159.2) scale(1.1151 1)" x="-0.33" y="0" font-size="10.5" fill="#ededed" style="font-family:&quot;Liberation Sans&quot;,sans-serif;white-space:pre">00130e0401406335_midi 0_out</text><path d="M415 11.6 L415 22.8 L417.7 20.3 L419.5 24.5 L421.4 23.7 L419.7 19.8 L422.8 19.7 Z" fill="#f8f8f8" stroke="#000" stroke-width="0.8" stroke-linejoin="round"/></svg></body></html>
